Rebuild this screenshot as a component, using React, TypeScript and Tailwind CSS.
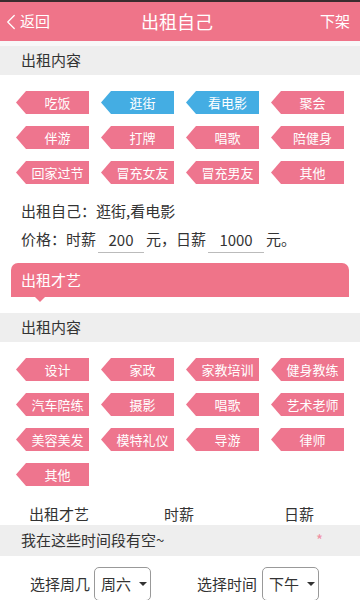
import { ChevronLeft } from "lucide-react";

const FONT = { fontFamily: '"Noto Sans CJK SC", "Noto Sans", sans-serif' };

const selfTags = [
  { label: "吃饭" },
  { label: "逛街", on: true },
  { label: "看电影", on: true },
  { label: "聚会" },
  { label: "伴游" },
  { label: "打牌" },
  { label: "唱歌" },
  { label: "陪健身" },
  { label: "回家过节" },
  { label: "冒充女友" },
  { label: "冒充男友" },
  { label: "其他" },
];

const talentTags = [
  "设计", "家政", "家教培训", "健身教练",
  "汽车陪练", "摄影", "唱歌", "艺术老师",
  "美容美发", "模特礼仪", "导游", "律师",
  "其他",
];

function Tag({ label, on }: { label: string; on?: boolean }) {
  return (
    <div
      className={`h-[23px] w-[73px] flex items-center justify-center pl-[10px] text-[13px] text-white [clip-path:polygon(10px_0,100%_0,100%_100%,10px_100%,0_50%)] ${on ? "bg-[#44ade3]" : "bg-[#ee758e]"}`}
    >
      {label}
    </div>
  );
}

function GrayBar({ children }: { children: React.ReactNode }) {
  return (
    <div className="h-[29px] bg-[#eeeeee] flex items-center px-[21px] text-[15px] text-[#333]">
      {children}
    </div>
  );
}

function Select({ value }: { value: string }) {
  return (
    <div className="h-[34px] w-[57px] border border-[#999] rounded-[5px] flex items-center pl-[6px] gap-[8px] text-[15px] text-[#333]">
      {value}
      <span className="w-0 h-0 border-l-[4px] border-r-[4px] border-t-[4px] border-l-transparent border-r-transparent border-t-[#333]" />
    </div>
  );
}

export default function App() {
  return (
    <div className="w-[360px] h-[600px] overflow-hidden bg-white" style={FONT}>
      {/* HEADER */}
      <div className="h-[2px] bg-[#3a2c2e]" />
      <div className="h-[39px] bg-[#ef7489] flex items-center justify-between text-white">
        <div className="flex items-center">
          <ChevronLeft size={26} strokeWidth={1.2} className="-ml-[2px]" />
          <span className="text-[15px] -ml-[4px]">返回</span>
        </div>
        <span className="text-[18px] -ml-[16px]">出租自己</span>
        <span className="text-[15px] pr-[10px]">下架</span>
      </div>
      <div className="h-[5px] bg-[#f8f8f8]" />

      <GrayBar>出租内容</GrayBar>
      <div className="grid grid-cols-[repeat(4,73px)] gap-x-[12px] gap-y-[12px] pl-[16px] pt-[16px]">
        {selfTags.map((t) => (
          <Tag key={t.label} label={t.label} on={t.on} />
        ))}
      </div>

      <div className="px-[21px] pt-[13px] text-[15px] text-[#333] leading-[28px]">
        <div>出租自己：逛街,看电影</div>
        <div className="flex items-end">
          价格：时薪
          <span className="inline-block w-[46px] text-center border-b border-[#bbb] leading-[24px] mx-[2px]">200</span>
          元，日薪
          <span className="inline-block w-[56px] text-center border-b border-[#bbb] leading-[24px] mx-[2px]">1000</span>
          元。
        </div>
      </div>

      {/* TALENT TAB */}
      <div className="mx-[11px] mt-[10px] relative">
        <div className="h-[34px] bg-[#ef7489] rounded-t-[7px] flex items-center px-[10px] text-[15px] text-white">
          出租才艺
        </div>
        <span className="absolute left-[24px] top-[34px] w-0 h-0 border-l-[5px] border-r-[5px] border-t-[5px] border-l-transparent border-r-transparent border-t-[#ef7489]" />
      </div>
      <div className="h-[16px]" />

      <GrayBar>出租内容</GrayBar>
      <div className="grid grid-cols-[repeat(4,73px)] gap-x-[12px] gap-y-[12px] pl-[16px] pt-[16px]">
        {talentTags.map((t, i) => (
          <Tag key={i} label={t} />
        ))}
      </div>

      <div className="h-[31px] mt-[8px] flex items-end text-[15px] text-[#333] leading-[22px]">
        <span className="ml-[29px]">出租才艺</span>
        <span className="ml-[75px]">时薪</span>
        <span className="ml-[90px]">日薪</span>
      </div>
      <div className="h-[31px] bg-[#eeeeee] flex items-center justify-between px-[21px] text-[15px] text-[#333]">
        <span>我在这些时间段有空~</span>
        <span className="text-[#f090a4] mr-[16px]">*</span>
      </div>

      <div className="flex items-center pt-[11px] text-[15px] text-[#333]">
        <span className="ml-[30px] mr-[4px]">选择周几</span>
        <Select value="周六" />
        <span className="ml-[46px] mr-[5px]">选择时间</span>
        <Select value="下午" />
      </div>
    </div>
  );
}
